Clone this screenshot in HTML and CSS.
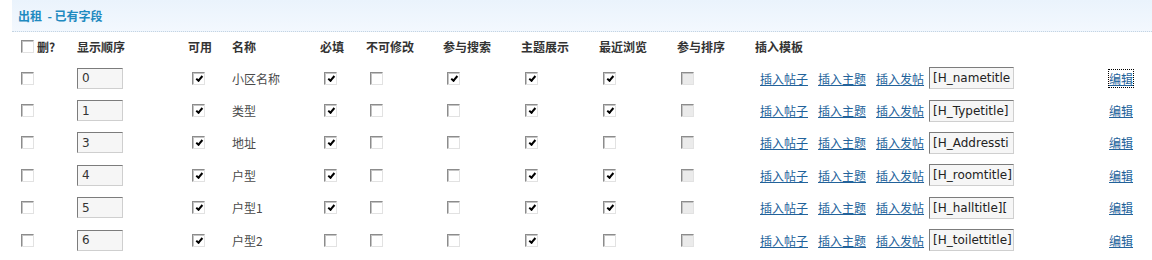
FILE: index.html
```html
<!DOCTYPE html>
<html lang="zh">
<head>
<meta charset="utf-8">
<link rel="stylesheet" href="styles.css">
</head>
<body>
<div class="bar"><span class="title">出租 &nbsp;- 已有字段</span></div>
<div class="table">
  <div class="row head">
    <div class="cell"><span class="cb"></span><span class="del">删?</span></div>
    <div class="cell">显示顺序</div>
    <div class="cell">可用</div>
    <div class="cell">名称</div>
    <div class="cell">必填</div>
    <div class="cell">不可修改</div>
    <div class="cell">参与搜索</div>
    <div class="cell">主题展示</div>
    <div class="cell">最近浏览</div>
    <div class="cell">参与排序</div>
    <div class="cell">插入模板</div>
    <div class="cell"></div>
  </div>

  <div class="row">
    <div class="cell"><span class="cb"></span></div>
    <div class="cell"><div class="num">0</div></div>
    <div class="cell d"><span class="cb on"></span></div>
    <div class="cell">小区名称</div>
    <div class="cell d"><span class="cb on"></span></div>
    <div class="cell d"><span class="cb"></span></div>
    <div class="cell d"><span class="cb on"></span></div>
    <div class="cell d"><span class="cb on"></span></div>
    <div class="cell d"><span class="cb on"></span></div>
    <div class="cell d"><span class="cb dis"></span></div>
    <div class="cell tpl"><a href="#">插入帖子</a><a href="#">插入主题</a><a href="#">插入发帖</a><div class="tin">[H_nametitle</div></div>
    <div class="cell"><a href="#" class="edit focus">编辑</a></div>
  </div>

  <div class="row">
    <div class="cell"><span class="cb"></span></div>
    <div class="cell"><div class="num">1</div></div>
    <div class="cell d"><span class="cb on"></span></div>
    <div class="cell">类型</div>
    <div class="cell d"><span class="cb on"></span></div>
    <div class="cell d"><span class="cb"></span></div>
    <div class="cell d"><span class="cb"></span></div>
    <div class="cell d"><span class="cb on"></span></div>
    <div class="cell d"><span class="cb on"></span></div>
    <div class="cell d"><span class="cb dis"></span></div>
    <div class="cell tpl"><a href="#">插入帖子</a><a href="#">插入主题</a><a href="#">插入发帖</a><div class="tin">[H_Typetitle]</div></div>
    <div class="cell"><a href="#" class="edit">编辑</a></div>
  </div>

  <div class="row">
    <div class="cell"><span class="cb"></span></div>
    <div class="cell"><div class="num">3</div></div>
    <div class="cell d"><span class="cb on"></span></div>
    <div class="cell">地址</div>
    <div class="cell d"><span class="cb on"></span></div>
    <div class="cell d"><span class="cb"></span></div>
    <div class="cell d"><span class="cb"></span></div>
    <div class="cell d"><span class="cb on"></span></div>
    <div class="cell d"><span class="cb"></span></div>
    <div class="cell d"><span class="cb dis"></span></div>
    <div class="cell tpl"><a href="#">插入帖子</a><a href="#">插入主题</a><a href="#">插入发帖</a><div class="tin">[H_Addressti</div></div>
    <div class="cell"><a href="#" class="edit">编辑</a></div>
  </div>

  <div class="row">
    <div class="cell"><span class="cb"></span></div>
    <div class="cell"><div class="num">4</div></div>
    <div class="cell d"><span class="cb on"></span></div>
    <div class="cell">户型</div>
    <div class="cell d"><span class="cb on"></span></div>
    <div class="cell d"><span class="cb"></span></div>
    <div class="cell d"><span class="cb"></span></div>
    <div class="cell d"><span class="cb on"></span></div>
    <div class="cell d"><span class="cb on"></span></div>
    <div class="cell d"><span class="cb dis"></span></div>
    <div class="cell tpl"><a href="#">插入帖子</a><a href="#">插入主题</a><a href="#">插入发帖</a><div class="tin">[H_roomtitle]</div></div>
    <div class="cell"><a href="#" class="edit">编辑</a></div>
  </div>

  <div class="row">
    <div class="cell"><span class="cb"></span></div>
    <div class="cell"><div class="num">5</div></div>
    <div class="cell d"><span class="cb on"></span></div>
    <div class="cell">户型1</div>
    <div class="cell d"><span class="cb on"></span></div>
    <div class="cell d"><span class="cb"></span></div>
    <div class="cell d"><span class="cb"></span></div>
    <div class="cell d"><span class="cb on"></span></div>
    <div class="cell d"><span class="cb on"></span></div>
    <div class="cell d"><span class="cb dis"></span></div>
    <div class="cell tpl"><a href="#">插入帖子</a><a href="#">插入主题</a><a href="#">插入发帖</a><div class="tin">[H_halltitle][</div></div>
    <div class="cell"><a href="#" class="edit">编辑</a></div>
  </div>

  <div class="row">
    <div class="cell"><span class="cb"></span></div>
    <div class="cell"><div class="num">6</div></div>
    <div class="cell d"><span class="cb on"></span></div>
    <div class="cell">户型2</div>
    <div class="cell d"><span class="cb"></span></div>
    <div class="cell d"><span class="cb"></span></div>
    <div class="cell d"><span class="cb"></span></div>
    <div class="cell d"><span class="cb on"></span></div>
    <div class="cell d"><span class="cb"></span></div>
    <div class="cell d"><span class="cb dis"></span></div>
    <div class="cell tpl"><a href="#">插入帖子</a><a href="#">插入主题</a><a href="#">插入发帖</a><div class="tin">[H_toilettitle]</div></div>
    <div class="cell"><a href="#" class="edit">编辑</a></div>
  </div>
</div>
</body>
</html>
```

FILE: styles.css
```css
html, body {
  margin: 0;
  padding: 0;
  background: #ffffff;
}
body {
  font-family: "Noto Sans CJK SC", "DejaVu Sans", sans-serif;
  font-size: 12px;
  color: #4a4a4a;
  padding-left: 12px;
}
.bar {
  height: 31px;
  background: linear-gradient(#eaf3fc, #f3f8fe);
  border-bottom: 1px dotted #c5d4e2;
  display: flex;
  align-items: center;
  padding-left: 6px;
}
.title {
  color: #1f8ac0;
  font-weight: bold;
  font-size: 12px;
}
.table {
  padding-left: 9px;
}
.row {
  display: grid;
  grid-template-columns: 56px 111px 44px 88px 46px 77px 78px 78px 78px 78px 354px 60px;
  height: 32.4px;
  align-items: center;
}
.row.head {
  box-sizing: border-box;
  height: 30px;
  padding-bottom: 2px;
  font-weight: bold;
  color: #333333;
}
.cell {
  display: flex;
  align-items: center;
  white-space: nowrap;
}
.cell.d {
  padding-left: 4px;
}
.del {
  margin-left: 3px;
}
.cb {
  display: inline-block;
  box-sizing: border-box;
  width: 13px;
  height: 13px;
  border: 1px solid;
  border-color: #8c8c8c #e2e2e2 #e2e2e2 #8c8c8c;
  box-shadow: inset 1px 1px 0 #c4c4c4;
  background: #ffffff;
  position: relative;
}
.cb.on::after {
  content: "";
  position: absolute;
  left: 2px;
  top: 1px;
  width: 5px;
  height: 2px;
  border-left: 2px solid #000;
  border-bottom: 2px solid #000;
  transform: rotate(-50deg) translate(-1px, 2px);
}
.cb.dis {
  background: #ebebeb;
}
.num {
  box-sizing: border-box;
  width: 46px;
  height: 21px;
  border: 1px solid;
  border-color: #7c7c7c #cfcfcf #cfcfcf #7c7c7c;
  background: #f6f6f6;
  font-family: "DejaVu Sans", sans-serif;
  font-size: 12px;
  color: #333333;
  padding: 0 4px;
  display: flex;
  align-items: center;
}
.tpl {
  padding-left: 5px;
}
.tpl a {
  margin-right: 10px;
}
.tpl a:nth-child(3) {
  margin-right: 5px;
}
a {
  color: #22629a;
  text-decoration: underline;
}
.tin {
  box-sizing: border-box;
  width: 85px;
  height: 22px;
  border: 1px solid;
  border-color: #7c7c7c #cfcfcf #cfcfcf #7c7c7c;
  background: #f6f6f6;
  font-family: "DejaVu Sans", sans-serif;
  font-size: 12px;
  color: #222222;
  padding: 0 3px;
  overflow: hidden;
  display: flex;
  align-items: center;
}
.edit.focus {
  outline: 1px dotted #000000;
}
```
